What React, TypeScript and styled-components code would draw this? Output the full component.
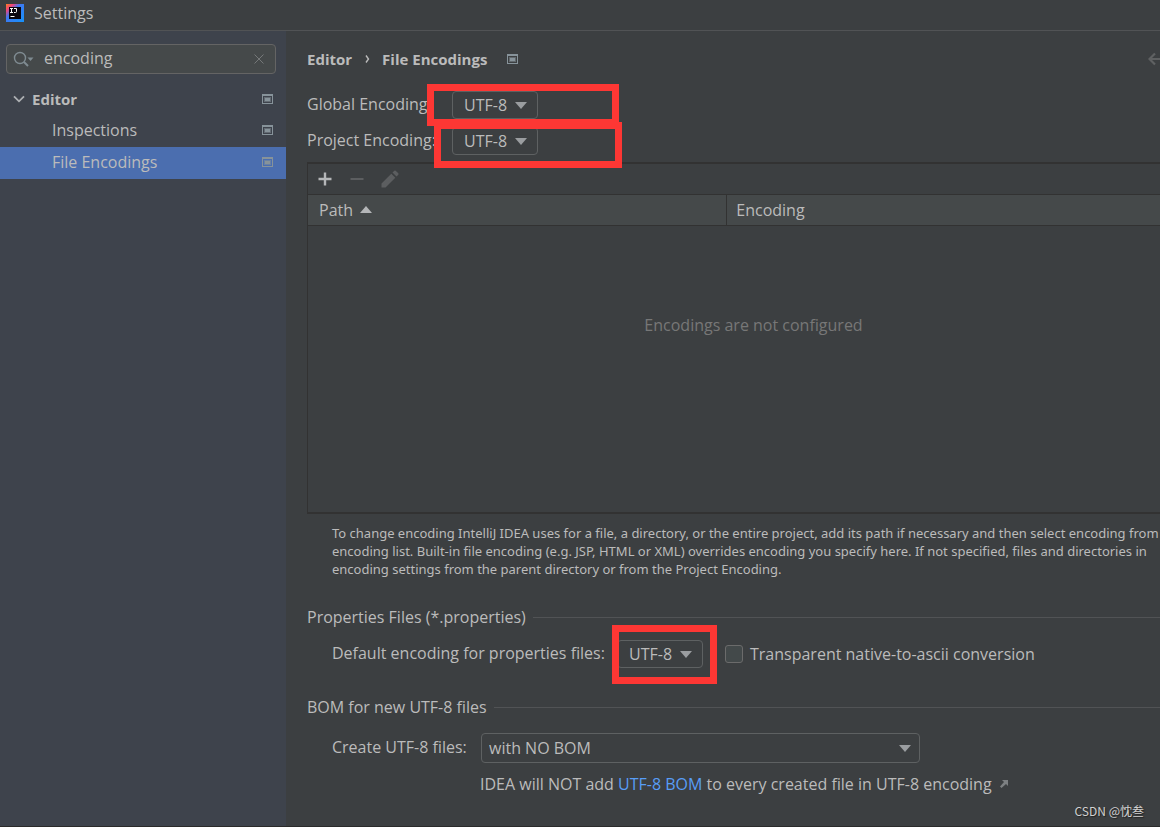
import React from "react";
import styled, { createGlobalStyle, css } from "styled-components";

const GlobalStyle = createGlobalStyle`
  *, *::before, *::after { box-sizing: border-box; }
  body {
    margin: 0;
    background: #3c3f41;
    color: #bbbbbb;
    font: 16px/20px "Open Sans", "Noto Sans", sans-serif;
  }
  button, input, select { font: inherit; color: inherit; }
`;

const Window = styled.div`
  position: relative;
  display: flex;
  flex-direction: column;
  min-height: 100vh;
  border-bottom: 1px solid #2b2b2b;
  overflow: hidden;
`;

const TitleBar = styled.header`
  display: flex;
  align-items: center;
  gap: 10px;
  height: 31px;
  padding: 0 6px 4px;
  border-bottom: 1px solid #515355;
`;

const Title = styled.h1`
  margin: 0;
  font-size: 16px;
  font-weight: 400;
`;

const Body = styled.div`
  display: flex;
  flex: 1;
`;

const Sidebar = styled.aside`
  flex: 0 0 286px;
  min-width: 0;
  padding-top: 13px;
  background: #3e434c;
`;

const SearchBox = styled.div`
  display: flex;
  align-items: center;
  gap: 10px;
  height: 30px;
  margin: 0 10px 9px 6px;
  padding: 0 11px 0 6px;
  background: #45494a;
  border: 1px solid #646464;
  border-radius: 4px;
`;

const SearchInput = styled.input`
  flex: 1;
  min-width: 0;
  padding: 0 0 2px;
  border: 0;
  outline: 0;
  background: transparent;
`;

const IconButton = styled.button`
  display: flex;
  padding: 0;
  border: 0;
  background: transparent;
`;

const Tree = styled.ul`
  margin: 0;
  padding: 0;
  list-style: none;
`;

const topLevel = css`
  padding: 0 13px;
  font-size: 15px;
  font-weight: 700;
`;

const nested = css`
  padding: 0 13px 2px 52px;
`;

const TreeRow = styled.li<{ $level: number; $selected?: boolean }>`
  display: flex;
  align-items: center;
  gap: 7px;
  height: 32px;
  background: ${(p) => (p.$selected ? "#4b6eaf" : "transparent")};
  ${(p) => (p.$level === 0 ? topLevel : nested)}
`;

const TreeLabel = styled.span`
  flex: 1;
`;

const Main = styled.main`
  flex: 1;
  min-width: 0;
  padding: 12px 0 0 21px;
  overflow: hidden;
`;

/* The settings page is wider than its viewport and runs past the right edge. */
const Page = styled.div`
  width: calc(100% + 40px);
`;

const Crumbs = styled.nav`
  display: flex;
  align-items: center;
  height: 32px;
  margin-bottom: 16px;
  font-size: 15px;
  font-weight: 700;
`;

const CrumbArrow = styled.span`
  display: flex;
  margin: 0 12px 0 13px;
`;

const CrumbIcon = styled.span`
  display: flex;
  flex: 1;
  margin-left: 20px;
`;

const History = styled.div`
  display: flex;
  gap: 14px;
  padding-right: 6px;
`;

const Field = styled.div<{ $indent?: boolean; $tall?: boolean }>`
  position: relative;
  display: flex;
  align-items: center;
  height: ${(p) => (p.$tall ? 36 : 28)}px;
  margin-bottom: 8px;
  padding-left: ${(p) => (p.$indent ? 25 : 0)}px;
`;

const Encodings = styled.section`
  display: grid;
  gap: 8px;
  margin-bottom: 7px;

  ${Field} { margin-bottom: 0; }
`;

const FieldLabel = styled.label<{ $width: number }>`
  flex: 0 0 ${(p) => p.$width}px;
  padding-bottom: 2px;
  white-space: nowrap;
`;

const Combo = styled.span<{ $wide?: boolean }>`
  position: relative;
  display: flex;
  flex: 0 0 ${(p) => (p.$wide ? 439 : 86)}px;
  height: ${(p) => (p.$wide ? 30 : 28)}px;

  select {
    width: 100%;
    padding: 0 ${(p) => (p.$wide ? 7 : 11)}px;
    appearance: none;
    background: transparent;
    border: 1px solid #5e6162;
    border-radius: 4px;
    outline: 0;
  }
  svg {
    position: absolute;
    top: 50%;
    right: ${(p) => (p.$wide ? 9 : 11)}px;
    margin-top: -3px;
    pointer-events: none;
  }
`;

const highlights = {
  global: css`left: 120px; top: -7px; width: 192px; height: 42px;`,
  project: css`left: 127px; top: -5px; width: 188px; height: 46px;`,
  properties: css`left: 305px; top: -15px; width: 105px; height: 59px;`,
};

const Highlight = styled.span<{ $of: keyof typeof highlights }>`
  position: absolute;
  z-index: 1;
  border: 7px solid #fd3734;
  pointer-events: none;
  ${(p) => highlights[p.$of]}
`;

const Panel = styled.section`
  min-height: 352px;
  border: solid #323232;
  border-width: 2px 1px;
`;

const Toolbar = styled.div`
  display: flex;
  align-items: center;
  gap: 16px;
  height: 30px;
  padding-left: 9px;
`;

const Table = styled.table`
  width: 100%;
  border-collapse: collapse;
  table-layout: fixed;

  th {
    height: 31px;
    padding: 0 11px 1px;
    font-weight: 400;
    text-align: left;
    background: #45494a;
    border: solid #323232;
    border-width: 1px 0;
  }
  th + th {
    padding-left: 9px;
    border-left: 1px solid #323232;
  }
  td {
    padding: 89px 0 0;
    color: #777777;
    text-align: center;
  }
`;

const SortLabel = styled.span`
  display: flex;
  align-items: center;
  gap: 7px;
`;

const Hint = styled.p`
  margin: 10px 0 29px 25px;
  font-family: "Noto Sans", sans-serif;
  font-size: 13px;
  line-height: 18px;
  white-space: nowrap;
`;

const SectionTitle = styled.h2`
  display: flex;
  align-items: center;
  gap: 7px;
  height: 20px;
  margin: 0 0 13px;
  font-size: 16px;
  font-weight: 400;

  &::after {
    content: "";
    flex: 1;
    height: 1px;
    background: #515355;
  }
`;

const Group = styled.section`
  margin-bottom: 29px;
`;

const CheckLabel = styled.label`
  display: flex;
  align-items: center;
  gap: 7px;
  margin-left: 22px;
`;

const CheckBox = styled.input`
  width: 18px;
  height: 18px;
  margin: 0;
  appearance: none;
  background: #43494a;
  border: 1px solid #6b6b6b;
  border-radius: 3px;
`;

const Note = styled.p`
  display: flex;
  align-items: center;
  gap: 8px;
  margin: 0 0 0 173px;
`;

const Link = styled.a`
  color: #589df6;
  text-decoration: none;
`;

const Watermark = styled.div`
  position: absolute;
  right: 16px;
  bottom: 6px;
  color: #d0d0d0;
  font: 12px/18px "Noto Sans CJK SC", sans-serif;
  text-shadow: 1px 1px 1px #222222;
`;

const Logo = () => (
  <svg width="18" height="18" viewBox="0 0 18 18" aria-hidden="true">
    <defs>
      <linearGradient id="logo" x1="0" y1="0" x2="1" y2="1">
        <stop offset="0" stopColor="#fc801d" />
        <stop offset="0.2" stopColor="#f0457c" />
        <stop offset="0.4" stopColor="#3f78f0" />
        <stop offset="1" stopColor="#1593fa" />
      </linearGradient>
    </defs>
    <rect width="18" height="18" fill="url(#logo)" />
    <rect x="3" y="3" width="12" height="12" fill="#0b0710" />
    <path d="M4 4.5h3M5.500 4.500v4M4 8.500h3M8 4.500h2.500v3q0 1-1 1H8M4.500 12.500h4" fill="none" stroke="#fff" />
  </svg>
);

const SearchIcon = () => (
  <svg width="21" height="17" viewBox="0 0 21 17" aria-hidden="true">
    <circle cx="7" cy="7" r="5.5" fill="none" stroke="#7f8b91" strokeWidth="1.4" />
    <path d="M11 11l4 4" stroke="#7f8b91" strokeWidth="2" />
    <path d="M14.5 6.5h6l-3 3.500z" fill="#7f8b91" />
  </svg>
);

const CloseIcon = () => (
  <svg width="10" height="10" viewBox="0 0 10 10" aria-hidden="true">
    <path d="M.5.5l9 9M9.5.5l-9 9" stroke="#757879" />
  </svg>
);

const Chevron = () => (
  <svg width="12" height="8" viewBox="0 0 12 8" aria-hidden="true">
    <path d="M1 1.3l5 5 5-5" fill="none" stroke="#adb0b3" strokeWidth="1.8" />
  </svg>
);

const ProjectIcon = () => (
  <svg width="11" height="10" viewBox="0 0 11 10" aria-hidden="true">
    <path d="M0 0h11v10H0zM1 2v7h9V2z" fill="#87939a" fillRule="evenodd" />
    <path d="M2 3h7v5H2z" fill="#87939a" fillOpacity="0.5" />
    <path d="M3 4h5v3H3z" fill="#87939a" />
  </svg>
);

const Triangle = ({ up = false }: { up?: boolean }) => (
  <svg width="12" height="7" viewBox="0 0 12 7" aria-hidden="true">
    <path d={up ? "M0 7h12L6 0z" : "M0 0h12L6 7z"} fill={up ? "#b4b6b8" : "#9a9da0"} />
  </svg>
);

const BackIcon = () => (
  <svg width="16" height="14" viewBox="0 0 16 14" aria-hidden="true">
    <path d="M7 1.500L1.500 7 7 12.500M1.500 7H15" fill="none" stroke="#5f6162" strokeWidth="2.2" />
  </svg>
);

const ForwardIcon = () => (
  <svg width="16" height="14" viewBox="0 0 16 14" aria-hidden="true">
    <path d="M9 1.500L14.500 7 9 12.500M14.500 7H1" fill="none" stroke="#5f6162" strokeWidth="2.2" />
  </svg>
);

const AddIcon = () => (
  <svg width="16" height="16" viewBox="0 0 16 16" aria-hidden="true">
    <path d="M8 1.500v13M1.500 8h13" stroke="#b4b6b8" strokeWidth="2.400" />
  </svg>
);

const RemoveIcon = () => (
  <svg width="16" height="16" viewBox="0 0 16 16" aria-hidden="true">
    <path d="M1.500 8h13" stroke="#5c5e60" strokeWidth="2" />
  </svg>
);

const EditIcon = () => (
  <svg width="18" height="18" viewBox="0 0 18 18" aria-hidden="true">
    <path d="M.5 17.5v-4L10.300 3.700l4 4L4.500 17.500zM11.500 2.500L13.300.7q.7-.6 1.400 0l2.600 2.600q.6.7 0 1.400L15.500 6.500z" fill="#5c5e60" />
  </svg>
);

const ExternalIcon = () => (
  <svg width="8" height="8" viewBox="0 0 8 8" aria-hidden="true">
    <path d="M2 0h6v6L6 4 1.500 8 0 6.500 4 2z" fill="#7d8082" />
  </svg>
);

interface EncodingSelectProps {
  id: string;
  value: string;
  wide?: boolean;
}

const EncodingSelect = ({ id, value, wide }: EncodingSelectProps) => (
  <Combo $wide={wide}>
    <select id={id} defaultValue={value}>
      <option>{value}</option>
    </select>
    <Triangle />
  </Combo>
);

export default function App() {
  return (
    <Window>
      <GlobalStyle />
      <TitleBar>
        <Logo />
        <Title>Settings</Title>
      </TitleBar>
      <Body>
        <Sidebar>
          <SearchBox>
            <SearchIcon />
            <SearchInput type="text" aria-label="Search settings" defaultValue="encoding" />
            <IconButton type="button" aria-label="Clear search">
              <CloseIcon />
            </IconButton>
          </SearchBox>
          <Tree>
            <TreeRow $level={0}>
              <Chevron />
              <TreeLabel>Editor</TreeLabel>
              <ProjectIcon />
            </TreeRow>
            <TreeRow $level={1}>
              <TreeLabel>Inspections</TreeLabel>
              <ProjectIcon />
            </TreeRow>
            <TreeRow $level={1} $selected>
              <TreeLabel>File Encodings</TreeLabel>
              <ProjectIcon />
            </TreeRow>
          </Tree>
        </Sidebar>
        <Main>
          <Page>
            <Crumbs>
              <span>Editor</span>
              <CrumbArrow>
                <svg width="5" height="8" viewBox="0 0 5 8" aria-hidden="true">
                  <path d="M1 .5l2.500 3.500L1 7.500" fill="none" stroke="#bbbbbb" strokeWidth="1.4" />
                </svg>
              </CrumbArrow>
              <span>File Encodings</span>
              <CrumbIcon>
                <ProjectIcon />
              </CrumbIcon>
              <History>
                <IconButton type="button" aria-label="Back">
                  <BackIcon />
                </IconButton>
                <IconButton type="button" aria-label="Forward">
                  <ForwardIcon />
                </IconButton>
              </History>
            </Crumbs>
            <Encodings>
              <Field>
                <FieldLabel $width={145} htmlFor="global">Global Encoding:</FieldLabel>
                <EncodingSelect id="global" value="UTF-8" />
                <Highlight $of="global" />
              </Field>
              <Field>
                <FieldLabel $width={145} htmlFor="project">Project Encoding:</FieldLabel>
                <EncodingSelect id="project" value="UTF-8" />
                <Highlight $of="project" />
              </Field>
            </Encodings>
            <Panel>
              <Toolbar>
                <IconButton type="button" aria-label="Add">
                  <AddIcon />
                </IconButton>
                <IconButton type="button" aria-label="Remove">
                  <RemoveIcon />
                </IconButton>
                <IconButton type="button" aria-label="Edit">
                  <EditIcon />
                </IconButton>
              </Toolbar>
              <Table>
                <colgroup>
                  <col width="47%" />
                  <col />
                </colgroup>
                <thead>
                  <tr>
                    <th>
                      <SortLabel>
                        Path <Triangle up />
                      </SortLabel>
                    </th>
                    <th>Encoding</th>
                  </tr>
                </thead>
                <tbody>
                  <tr>
                    <td colSpan={2}>Encodings are not configured</td>
                  </tr>
                </tbody>
              </Table>
            </Panel>
            <Hint>
              To change encoding IntelliJ IDEA uses for a file, a directory, or the entire project, add its path if necessary and then select encoding from
              <br />
              encoding list. Built-in file encoding (e.g. JSP, HTML or XML) overrides encoding you specify here. If not specified, files and directories in
              <br />
              encoding settings from the parent directory or from the Project Encoding.
            </Hint>
            <Group>
              <SectionTitle>Properties Files (*.properties)</SectionTitle>
              <Field $indent>
                <FieldLabel $width={285} htmlFor="properties">Default encoding for properties files:</FieldLabel>
                <EncodingSelect id="properties" value="UTF-8" />
                <CheckLabel>
                  <CheckBox type="checkbox" />
                  Transparent native-to-ascii conversion
                </CheckLabel>
                <Highlight $of="properties" />
              </Field>
            </Group>
            <SectionTitle>BOM for new UTF-8 files</SectionTitle>
            <Field $indent $tall>
              <FieldLabel $width={149} htmlFor="bom">Create UTF-8 files:</FieldLabel>
              <EncodingSelect id="bom" value="with NO BOM" wide />
            </Field>
            <Note>
              <span>
                IDEA will NOT add <Link href="#bom">UTF-8 BOM</Link> to every created file in UTF-8 encoding
              </span>
              <ExternalIcon />
            </Note>
          </Page>
        </Main>
      </Body>
      <Watermark>CSDN @忱叁</Watermark>
    </Window>
  );
}
